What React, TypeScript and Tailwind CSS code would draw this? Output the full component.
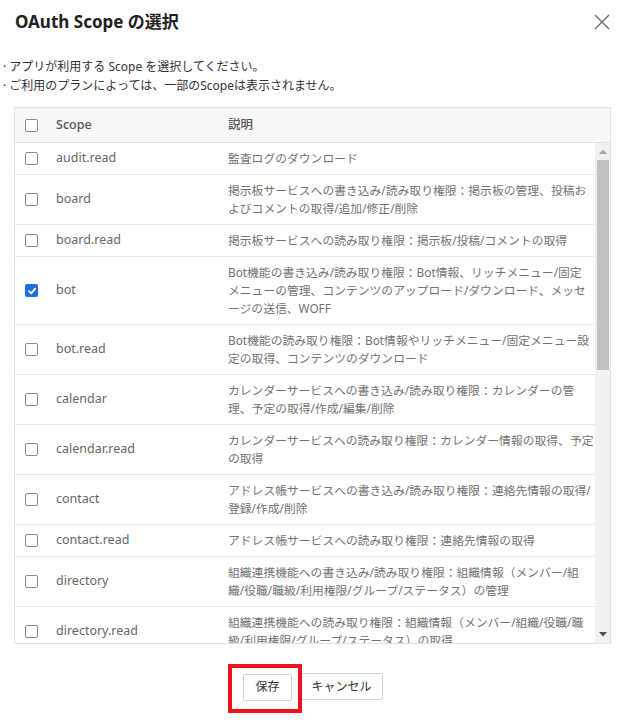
import React from "react";

type Row = { scope: string; desc: string[]; checked?: boolean };

const rows: Row[] = [
  { scope: "audit.read", desc: ["監査ログのダウンロード"] },
  {
    scope: "board",
    desc: [
      "掲示板サービスへの書き込み/読み取り権限：掲示板の管理、投稿お",
      "よびコメントの取得/追加/修正/削除",
    ],
  },
  { scope: "board.read", desc: ["掲示板サービスへの読み取り権限：掲示板/投稿/コメントの取得"] },
  {
    scope: "bot",
    checked: true,
    desc: [
      "Bot機能の書き込み/読み取り権限：Bot情報、リッチメニュー/固定",
      "メニューの管理、コンテンツのアップロード/ダウンロード、メッセ",
      "ージの送信、WOFF",
    ],
  },
  {
    scope: "bot.read",
    desc: [
      "Bot機能の読み取り権限：Bot情報やリッチメニュー/固定メニュー設",
      "定の取得、コンテンツのダウンロード",
    ],
  },
  {
    scope: "calendar",
    desc: [
      "カレンダーサービスへの書き込み/読み取り権限：カレンダーの管",
      "理、予定の取得/作成/編集/削除",
    ],
  },
  {
    scope: "calendar.read",
    desc: ["カレンダーサービスへの読み取り権限：カレンダー情報の取得、予定", "の取得"],
  },
  {
    scope: "contact",
    desc: ["アドレス帳サービスへの書き込み/読み取り権限：連絡先情報の取得/", "登録/作成/削除"],
  },
  { scope: "contact.read", desc: ["アドレス帳サービスへの読み取り権限：連絡先情報の取得"] },
  {
    scope: "directory",
    desc: [
      "組織連携機能への書き込み/読み取り権限：組織情報（メンバー/組",
      "織/役職/職級/利用権限/グループ/ステータス）の管理",
    ],
  },
  {
    scope: "directory.read",
    desc: [
      "組織連携機能への読み取り権限：組織情報（メンバー/組織/役職/職",
      "級/利用権限/グループ/ステータス）の取得",
    ],
  },
];

function Check({ checked }: { checked?: boolean }) {
  if (checked) {
    return (
      <span className="w-[13px] h-[13px] rounded-[2px] bg-[#1b6fe8] flex items-center justify-center shrink-0">
        <svg width="10" height="10" viewBox="0 0 10 10">
          <path d="M2 5.2 L4.1 7.3 L8.2 2.6" fill="none" stroke="#fff" strokeWidth="1.8" strokeLinecap="round" strokeLinejoin="round" />
        </svg>
      </span>
    );
  }
  return <span className="w-[13px] h-[13px] rounded-[2px] border border-[#8a8a8a] bg-white shrink-0" />;
}

export default function App() {
  return (
    <div className="w-[626px] h-[720px] bg-white relative font-['Noto_Sans','Noto_Sans_CJK_JP',sans-serif]">
      <div className="flex items-center justify-between pl-[15px] pr-[16px] pt-[11px]">
        <h1 className="text-[17px] leading-[22px] font-bold text-[#222]">OAuth Scope の選択</h1>
        <svg width="16" height="16" viewBox="0 0 16 16">
          <path d="M1 1 L15 15 M15 1 L1 15" stroke="#666" strokeWidth="1.3" fill="none" />
        </svg>
      </div>

      <div className="mt-[24px] pl-[3px] text-[12px] leading-[19px] text-[#333]">
        <p>· アプリが利用する Scope を選択してください。</p>
        <p>· ご利用のプランによっては、一部のScopeは表示されません。</p>
      </div>

      <div className="ml-[14px] w-[597px] mt-[12px] border border-[#e2e2e2]">
        <div className="flex h-[35px] bg-[#f7f7f7] border-b border-[#e2e2e2] text-[12.5px] text-[#555] font-medium">
          <div className="w-[203px] flex items-center pl-[10px] gap-[18px]">
            <Check />
            <span>Scope</span>
          </div>
          <div className="flex items-center pl-[10px]">
            <span>説明</span>
          </div>
        </div>

        <div className="flex h-[500px] overflow-hidden">
          <div className="flex-1 flex flex-col">
            {rows.map((r) => (
              <div key={r.scope} className="flex border-b border-[#e6e6e6] shrink-0">
                <div className="w-[203px] flex items-center pl-[10px] gap-[18px] text-[12.5px] text-[#666]">
                  <Check checked={r.checked} />
                  <span>{r.scope}</span>
                </div>
                <div className="pl-[10px] pt-[6px] pb-[7px] text-[11.8px] leading-[18px] text-[#727272] whitespace-nowrap">
                  {r.desc.map((l, i) => (
                    <div key={i}>{l}</div>
                  ))}
                </div>
              </div>
            ))}
          </div>
          <div className="w-[15px] bg-[#f1f1f1] flex flex-col items-center">
            <div className="h-[17px] flex items-center justify-center">
              <svg width="8" height="5" viewBox="0 0 8 5">
                <path d="M0 5 L4 0.5 L8 5 Z" fill="#a3a3a3" />
              </svg>
            </div>
            <div className="w-[12px] h-[210px] bg-[#c1c1c1]" />
            <div className="flex-1" />
            <div className="h-[17px] flex items-center justify-center">
              <svg width="8" height="5" viewBox="0 0 8 5">
                <path d="M0 0 L8 0 L4 4.5 Z" fill="#505050" />
              </svg>
            </div>
          </div>
        </div>
      </div>

      <div className="mt-[29px] flex justify-center gap-[8px]">
        <div className="relative">
          <button className="w-[49px] h-[27px] border border-[#d0d0d0] bg-white text-[12px] text-[#333] rounded-[2px]">
            保存
          </button>
          <div className="absolute left-[-15px] top-[-9px] w-[74px] h-[49px] border-[4px] border-[#e8141f] pointer-events-none" />
        </div>
        <button className="w-[83px] h-[27px] border border-[#d0d0d0] bg-white text-[12px] text-[#333] rounded-[2px]">
          キャンセル
        </button>
      </div>
    </div>
  );
}
